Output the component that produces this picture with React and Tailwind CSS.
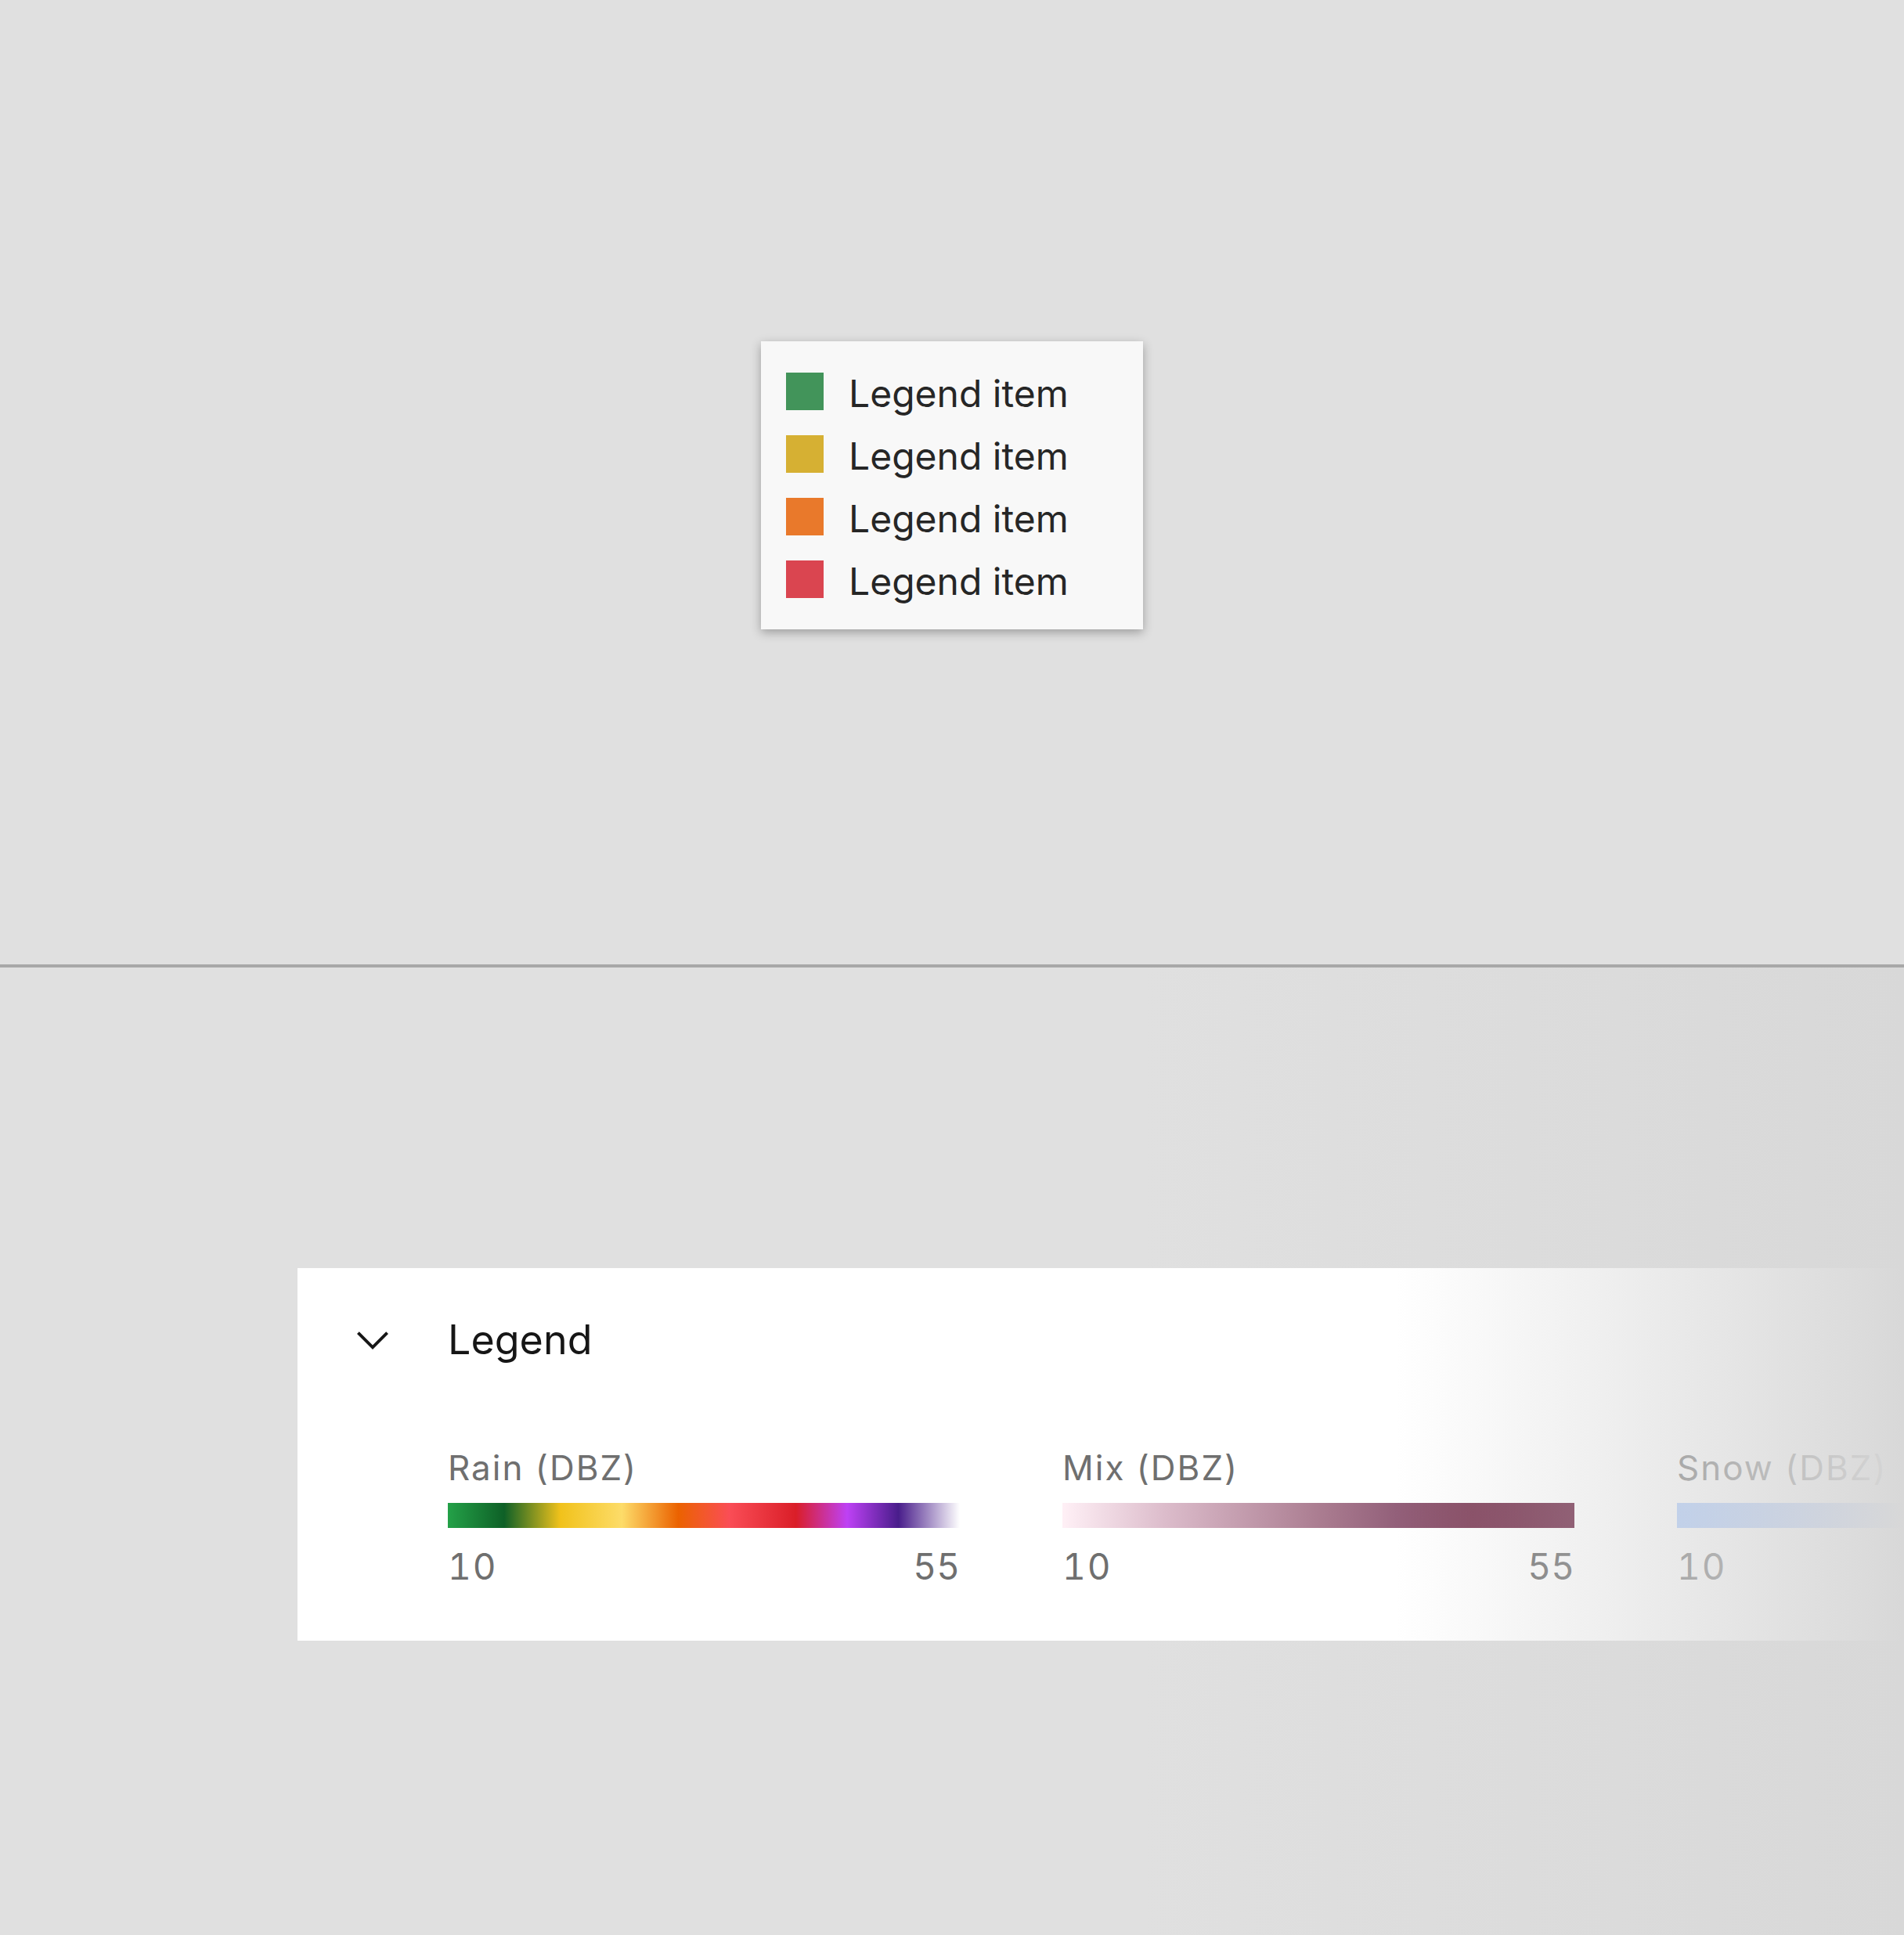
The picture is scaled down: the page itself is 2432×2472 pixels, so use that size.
import React from 'react';

const legendItems = [
  { color: 'bg-[#42945a]' },
  { color: 'bg-[#d6b033]' },
  { color: 'bg-[#e9792b]' },
  { color: 'bg-[#da4550]' },
];

const scales = [
  {
    label: 'Rain (DBZ)',
    bar: 'bg-[linear-gradient(to_right,#24a148_0%,#0e6027_11%,#f1c21b_22%,#fddc69_34%,#eb6200_45%,#fa4d56_55%,#da1e28_68%,#be41f5_78%,#491d8b_88%,#ffffff_100%)]',
    min: '10',
    max: '55',
  },
  {
    label: 'Mix (DBZ)',
    bar: 'bg-[linear-gradient(to_right,#fff0f6_0%,#dcbccb_20%,#ab7d91_50%,#93607a_65%,#7d3b56_80%,#6a2040_100%)]',
    min: '10',
    max: '55',
  },
  {
    label: 'Snow (DBZ)',
    bar: 'bg-[linear-gradient(to_right,#a6c8ff_0%,#8ea6f0_100%)]',
    min: '10',
    max: '55',
  },
];

const ChevronDown = () => (
  <svg width="64" height="64" viewBox="0 0 32 32" className="shrink-0">
    <path d="M16 22L6 12l1.4-1.4L16 19.2l8.6-8.6L26 12z" fill="#161616" />
  </svg>
);

const App = () => {
  return (
    <div className="w-[2432px] h-[2472px] overflow-hidden bg-[#e0e0e0] font-['Inter',sans-serif] flex flex-col">
      {/* Simple legend */}
      <div className="h-[1232px] flex items-center justify-center pt-2">
        <div className="w-[488px] bg-[#f8f8f8] shadow-[0_4px_12px_rgba(0,0,0,0.3)] pl-8 py-10 flex flex-col gap-8">
          {legendItems.map((item, i) => (
            <div key={i} className="flex items-center gap-8 h-12">
              <div className={`w-12 h-12 shrink-0 ${item.color}`} />
              <span className="text-[48px] leading-none pt-[6px] text-[#262626]">Legend item</span>
            </div>
          ))}
        </div>
      </div>

      <div className="h-1 bg-[#a8a8a8]" />

      {/* Gradient legend panel */}
      <div className="flex-1 bg-[linear-gradient(to_right,#e0e0e0_60%,#d8d8d8_100%)] pt-[384px] pl-[380px]">
        <div className="relative bg-white w-[2200px] h-[476px] pt-[60px] pl-16">
          <div className="flex items-center gap-16 h-16">
            <ChevronDown />
            <span className="text-[52px] leading-none text-[#161616]">Legend</span>
          </div>

          <div className="flex gap-[131px] pl-32 mt-[109px]">
            {scales.map((s) => (
              <div key={s.label} className="w-[654px] shrink-0 flex flex-col">
                <span className="text-[44px] leading-none tracking-[2px] text-[#6f6f6f]">{s.label}</span>
                <div className={`h-8 mt-[23px] ${s.bar}`} />
                <div className="flex justify-between mt-[26px] text-[46px] leading-none tabular-nums tracking-[2px] text-[#6f6f6f]">
                  <span>{s.min}</span>
                  <span className="tracking-normal">{s.max}</span>
                </div>
              </div>
            ))}
          </div>

          {/* fade out on the right */}
          <div className="absolute top-0 bottom-0 left-[1403px] right-0 bg-[linear-gradient(to_right,rgba(216,216,216,0)_0px,#d8d8d8_649px)]" />
        </div>
      </div>
    </div>
  );
};

export default App;
